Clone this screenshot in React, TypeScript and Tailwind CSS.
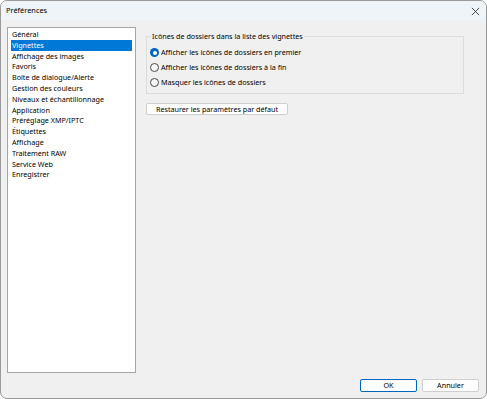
import React, { useState } from 'react';

const categories = [
  'Général',
  'Vignettes',
  'Affichage des images',
  'Favoris',
  'Boîte de dialogue/Alerte',
  'Gestion des couleurs',
  'Niveaux et échantillonnage',
  'Application',
  'Préréglage XMP/IPTC',
  'Étiquettes',
  'Affichage',
  'Traitement RAW',
  'Service Web',
  'Enregistrer',
];

const folderOptions = [
  'Afficher les icônes de dossiers en premier',
  'Afficher les icônes de dossiers à la fin',
  'Masquer les icônes de dossiers',
];

function Radio({ checked }: { checked: boolean }) {
  return checked ? (
    <span className="flex h-[9px] w-[9px] shrink-0 items-center justify-center rounded-full bg-[#0067c0]">
      <span className="h-[4px] w-[4px] rounded-full bg-white" />
    </span>
  ) : (
    <span className="h-[9px] w-[9px] shrink-0 rounded-full border border-[#4a4a4a] bg-[#f7f7f7]" />
  );
}

export default function App() {
  const [selected, setSelected] = useState(1);
  const [folderMode, setFolderMode] = useState(0);

  return (
    <div
      className="flex h-[399px] w-[487px] flex-col overflow-hidden rounded-[7px] border border-[#9a9a9a] bg-[#f0f0f0] text-[7.2px] text-black"
      style={{ fontFamily: '"Noto Sans", "Open Sans", sans-serif' }}
    >
      {/* title bar */}
      <div className="flex h-[19px] shrink-0 items-center justify-between bg-[#eef4f7] pl-[5px] pr-[4px] pt-[1px]">
        <span className="text-[7.4px]">Préférences</span>
        <svg width="9" height="9" viewBox="0 0 10 10" className="mr-[2px]">
          <path d="M1 1 L9 9 M9 1 L1 9" stroke="#333" strokeWidth="1" />
        </svg>
      </div>

      <div className="flex flex-1 gap-[10px] pl-[6px] pr-[7px] pt-[7px]">
        {/* categories */}
        <ul className="h-[346px] w-[129px] shrink-0 border border-[#a5a5a5] bg-white px-[3px] pt-[1px]">
          {categories.map((c, i) => (
            <li
              key={c}
              onClick={() => setSelected(i)}
              className={
                'h-[10.8px] pl-[1px] leading-[10.8px] whitespace-nowrap ' +
                (i === selected ? 'bg-[#0078d7] text-white' : '')
              }
            >
              {c}
            </li>
          ))}
        </ul>

        {/* options */}
        <div className="flex flex-1 flex-col pt-[9px]">
          <div className="relative mr-[15px] h-[58px] border border-[#dcdcdc] pl-[3px] pt-[10px]">
            <span className="absolute -top-[6px] left-[4px] bg-[#f0f0f0] px-[1px] leading-[10px]">
              Icônes de dossiers dans la liste des vignettes
            </span>
            <div className="flex flex-col gap-[4px]">
              {folderOptions.map((o, i) => (
                <label
                  key={o}
                  onClick={() => setFolderMode(i)}
                  className="flex h-[11px] items-center gap-[2px]"
                >
                  <Radio checked={folderMode === i} />
                  <span>{o}</span>
                </label>
              ))}
            </div>
          </div>
          <button className="mt-[9px] h-[12px] w-[142px] rounded-[2px] border border-[#cfcfcf] bg-white text-[7.2px] leading-[10px]">
            Restaurer les paramètres par défaut
          </button>
        </div>
      </div>

      {/* footer */}
      <div className="flex justify-end gap-[5px] pb-[6px] pr-[7px]">
        <button className="h-[13px] w-[57px] rounded-[2px] border border-[#0067c0] bg-white text-[7.2px] leading-[11px]">
          OK
        </button>
        <button className="h-[13px] w-[57px] rounded-[2px] border border-[#cfcfcf] bg-white text-[7.2px] leading-[11px]">
          Annuler
        </button>
      </div>
    </div>
  );
}
